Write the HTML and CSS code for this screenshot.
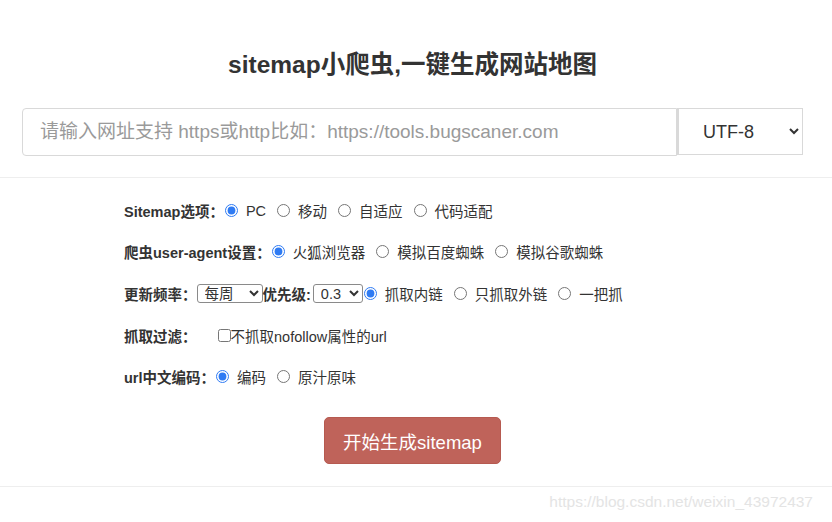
FILE: index.html
```html
<!DOCTYPE html>
<html lang="zh-CN">
<head>
<meta charset="utf-8">
<title>sitemap小爬虫</title>
<link rel="stylesheet" href="styles.css">
</head>
<body>
<div class="top">
  <h1 class="title">sitemap小爬虫,一键生成网站地图</h1>
  <div class="search">
    <input class="url" type="text" placeholder="请输入网址支持 https或http比如：https://tools.bugscaner.com">
    <select class="charset"><option>UTF-8</option><option>GBK</option></select>
  </div>
</div>
<div class="options">
  <div class="row">
    <span class="label">Sitemap选项：</span>
    <label class="opt first"><input type="radio" name="t" checked>PC</label>
    <label class="opt"><input type="radio" name="t">移动</label>
    <label class="opt"><input type="radio" name="t">自适应</label>
    <label class="opt"><input type="radio" name="t">代码适配</label>
  </div>
  <div class="row">
    <span class="label">爬虫user-agent设置：</span>
    <label class="opt first"><input type="radio" name="ua" checked>火狐浏览器</label>
    <label class="opt"><input type="radio" name="ua">模拟百度蜘蛛</label>
    <label class="opt"><input type="radio" name="ua">模拟谷歌蜘蛛</label>
  </div>
  <div class="row tall">
    <span class="label">更新频率：</span>
    <select class="mini freq"><option>每周</option><option>每天</option></select>
    <span class="label">优先级:</span>
    <select class="mini prio"><option>0.3</option><option>0.5</option></select>
    <label class="opt tight"><input type="radio" name="c" checked>抓取内链</label>
    <label class="opt"><input type="radio" name="c">只抓取外链</label>
    <label class="opt"><input type="radio" name="c">一把抓</label>
  </div>
  <div class="row">
    <span class="label">抓取过滤：</span>
    <label class="check"><input type="checkbox">不抓取nofollow属性的url</label>
  </div>
  <div class="row">
    <span class="label">url中文编码：</span>
    <label class="opt first"><input type="radio" name="e" checked>编码</label>
    <label class="opt"><input type="radio" name="e">原汁原味</label>
  </div>
</div>
<div class="actions">
  <button class="go" type="button">开始生成sitemap</button>
</div>
<div class="footer">https://blog.csdn.net/weixin_43972437</div>
</body>
</html>
```
FILE: styles.css
```css
html, body {
  margin: 0;
  background: #fff;
  font-family: "Liberation Sans", "Noto Sans CJK SC", sans-serif;
  color: #333;
}
.top {
  padding: 50px 7px 21px 0;
  border-bottom: 1px solid #eee;
}
.title {
  margin: 0;
  text-align: center;
  font-size: 24.5px;
  line-height: 30px;
  font-weight: bold;
  color: #333;
}
.search {
  display: flex;
  margin: 28px 22px 0 22px;
  height: 48px;
}
.url {
  flex: 1;
  min-width: 0;
  box-sizing: border-box;
  height: 48px;
  border: 1px solid #d9d9d9;
  border-radius: 4px 0 0 4px;
  padding: 0 17px;
  font-family: inherit;
  font-size: 19px;
  color: #333;
  outline: none;
}
.url::placeholder {
  color: #9a9a9a;
}
.charset {
  width: 126px;
  height: 47px;
  box-sizing: border-box;
  border: 1px solid #d9d9d9;
  border-left-width: 2px;
  border-radius: 0;
  background: #fff;
  padding: 0 0 0 20px;
  font-family: inherit;
  font-size: 18px;
  color: #333;
}
.options {
  padding: 12px 0 0 124px;
  font-size: 14.5px;
}
.row {
  display: flex;
  align-items: center;
  height: 41px;
  white-space: nowrap;
}
.row.tall {
  height: 43px;
}
.label {
  font-weight: bold;
  color: #333;
}
.opt {
  display: inline-flex;
  align-items: center;
  margin-right: 11px;
  color: #333;
}
.opt input {
  margin: 0 8px 0 0;
  width: 13px;
  height: 13px;
  accent-color: #2f7bf3;
}
.opt.first {
  margin-left: 1px;
}
.opt.tight {
  margin-left: 1px;
}
.mini {
  height: 19px;
  box-sizing: border-box;
  border: 1px solid #8a8a8a;
  border-radius: 3px;
  background: #fff;
  font-family: inherit;
  font-size: 14.5px;
  color: #333;
  padding: 0 0 0 3px;
}
.freq {
  width: 66px;
  margin: 0;
}
.prio {
  width: 50px;
  margin-left: 2px;
}
.check {
  display: inline-flex;
  align-items: center;
  margin-left: 21px;
  color: #333;
}
.check input {
  margin: 0;
  width: 13px;
  height: 13px;
}
.actions {
  display: flex;
  justify-content: center;
  padding: 20px 7px 22px 0;
  border-bottom: 1px solid #eee;
}
.go {
  width: 177px;
  height: 47px;
  border: 1px solid #b65a50;
  border-radius: 5px;
  background: #bf635a;
  color: #fff;
  font-family: inherit;
  font-size: 18.5px;
}
.footer {
  text-align: right;
  padding: 6px 19px 0 0;
  font-size: 15.5px;
  color: #e4e4e4;
}
```
